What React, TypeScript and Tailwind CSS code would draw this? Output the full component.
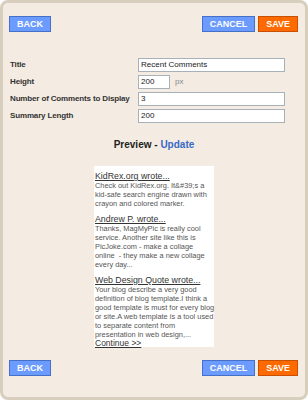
import React from 'react';

const sans = { fontFamily: '"Liberation Sans", Arial, sans-serif' };

function Btn({ label, kind }: { label: string; kind: 'blue' | 'orange' }) {
  return (
    <button
      className={`h-[16px] px-[7px] text-[9px] font-bold leading-none text-white border ${
        kind === 'blue' ? 'bg-[#6b9bff] border-[#4470c8]' : 'bg-[#ff6a00] border-[#c85000]'
      }`}
    >
      {label}
    </button>
  );
}

function ButtonBar() {
  return (
    <div className="flex items-center justify-between pl-[6px] pr-[7px]">
      <div className="w-[38px] flex">
        <Btn label="BACK" kind="blue" />
      </div>
      <div className="flex gap-[3px]">
        <Btn label="CANCEL" kind="blue" />
        <Btn label="SAVE" kind="orange" />
      </div>
    </div>
  );
}

function Field({ label, value, short }: { label: string; value: string; short?: boolean }) {
  return (
    <div className="flex items-center h-[14px]">
      <label className="w-[128px] shrink-0 whitespace-nowrap text-[8px] tracking-[-0.15px] font-bold text-[#333]">
        {label}
      </label>
      <div
        className={`h-[14px] border border-[#a8b0b8] bg-white px-[2px] text-[8px] leading-[12px] text-[#222] ${
          short ? 'w-[32px]' : 'w-[147px]'
        }`}
      >
        {value}
      </div>
      {short && <span className="ml-[5px] text-[8px] text-[#888]">px</span>}
    </div>
  );
}

const comments = [
  {
    who: 'KidRex.org wrote...',
    lines: ['Check out KidRex.org. It&#39;s a', 'kid-safe search engine drawn with', 'crayon and colored marker.'],
  },
  {
    who: 'Andrew P. wrote...',
    lines: [
      'Thanks, MagMyPic is really cool',
      'service. Another site like this is',
      'PicJoke.com - make a collage',
      'online  - they make a new collage',
      'every day...',
    ],
  },
  {
    who: 'Web Design Quote wrote...',
    lines: [
      'Your blog describe a very good',
      'definition of blog template.I think a',
      'good template is must for every blog',
      'or site.A web template is a tool used',
      'to separate content from',
      'presentation in web design,...',
    ],
  },
];

export default function App() {
  return (
    <div className="w-[308px] h-[400px] bg-white" style={sans}>
      <div className="h-full flex flex-col border-[3px] border-[#d8cebe] rounded-[8px] bg-[#f4ece2] pt-[13px]">
        <ButtonBar />

        <div className="mt-[26px] pl-[7px] flex flex-col gap-[3px]">
          <Field label="Title" value="Recent Comments" />
          <Field label="Height" value="200" short />
          <Field label="Number of Comments to Display" value="3" />
          <Field label="Summary Length" value="200" />
        </div>

        <p className="mt-[16px] text-center text-[10px] font-bold text-[#222] leading-[12px]">
          Preview - <span className="text-[#3a68c8]">Update</span>
        </p>

        <div className="mt-[15px] mx-auto w-[120px] h-[181px] bg-white pl-[1px] pt-[5px] text-[7.4px] leading-[9px] text-[#555]">
          {comments.map((c) => (
            <div key={c.who} className="mb-[6px]">
              <div className="text-[8.8px] leading-[10px] text-[#333] underline">{c.who}</div>
              <div className="whitespace-pre">
                {c.lines.map((l) => (
                  <div key={l}>{l}</div>
                ))}
              </div>
            </div>
          ))}
          <div className="-mt-[6px] text-[8.5px] leading-[9px] text-[#333] underline">Continue &gt;&gt;</div>
        </div>

        <div className="mt-[13px]">
          <ButtonBar />
        </div>
      </div>
    </div>
  );
}
